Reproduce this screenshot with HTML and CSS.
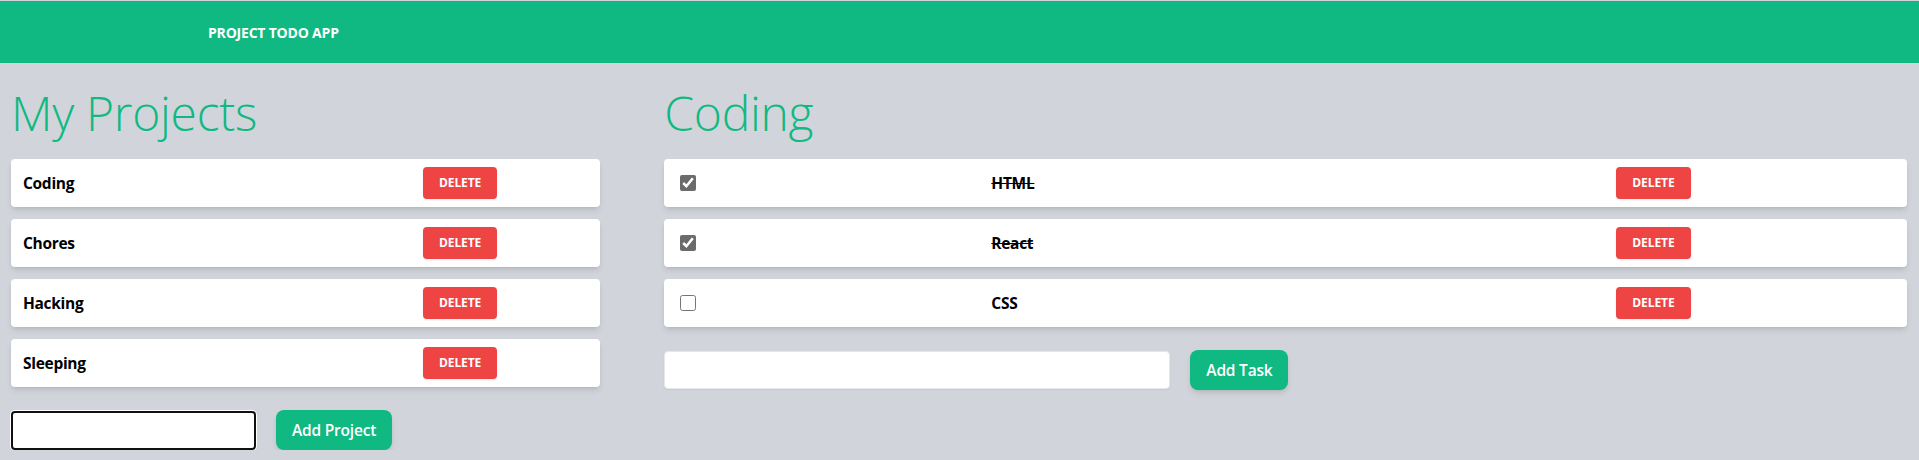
FILE: index.html
```html
<!DOCTYPE html>
<html lang="en">
<head>
<meta charset="utf-8">
<title>Project Todo App</title>
<link rel="stylesheet" href="styles.css">
</head>
<body>
<header class="topbar"><span class="brand">PROJECT TODO APP</span></header>
<main class="board">
  <section class="projects">
    <h1 class="title">My Projects</h1>
    <ul class="list">
      <li class="card project-card"><span class="name">Coding</span><button class="btn-delete">DELETE</button></li>
      <li class="card project-card"><span class="name">Chores</span><button class="btn-delete">DELETE</button></li>
      <li class="card project-card"><span class="name">Hacking</span><button class="btn-delete">DELETE</button></li>
      <li class="card project-card"><span class="name">Sleeping</span><button class="btn-delete">DELETE</button></li>
    </ul>
    <form class="add-row">
      <input class="field field-project" type="text" autofocus>
      <button type="button" class="btn-add">Add Project</button>
    </form>
  </section>
  <section class="tasks">
    <h1 class="title">Coding</h1>
    <ul class="list">
      <li class="card task-card"><input class="check" type="checkbox" checked><span class="name done">HTML</span><button class="btn-delete">DELETE</button></li>
      <li class="card task-card"><input class="check" type="checkbox" checked><span class="name done">React</span><button class="btn-delete">DELETE</button></li>
      <li class="card task-card"><input class="check" type="checkbox"><span class="name">CSS</span><button class="btn-delete">DELETE</button></li>
    </ul>
    <form class="add-row">
      <input class="field field-task" type="text">
      <button type="button" class="btn-add">Add Task</button>
    </form>
  </section>
</main>
</body>
</html>
```
FILE: styles.css
```css
* { box-sizing: border-box; }

html, body {
  margin: 0;
  padding: 0;
  background: #d1d5db;
  font-family: "Open Sans", "Noto Sans", sans-serif;
  color: #000;
}

.topbar {
  margin-top: 1px;
  height: 62px;
  background: #10b981;
  display: flex;
  align-items: center;
  padding-left: 208px;
}

.brand {
  color: #fff;
  font-weight: 700;
  font-size: 14px;
  letter-spacing: -0.2px;
}

.board {
  display: grid;
  grid-template-columns: repeat(3, 1fr);
  column-gap: 64px;
  padding: 26px 12px 0 11px;
}

.tasks { grid-column: span 2; }

.title {
  margin: 0 0 22px;
  font-weight: 300;
  font-size: 48px;
  line-height: 48px;
  color: #10b981;
  letter-spacing: -0.3px;
}

.list {
  list-style: none;
  margin: 0;
  padding: 0;
  display: flex;
  flex-direction: column;
  gap: 12px;
}

.card {
  height: 48px;
  background: #fff;
  border-radius: 4px;
  box-shadow: 0 4px 6px -1px rgba(0,0,0,0.1), 0 2px 4px -2px rgba(0,0,0,0.1);
  display: grid;
  align-items: center;
  justify-items: start;
}

.project-card {
  grid-template-columns: 400px auto;
  padding: 0 12px;
}

.task-card {
  grid-template-columns: 311px 625px auto;
  padding: 0 12px 0 16px;
}

.name {
  font-weight: 700;
  font-size: 15.5px;
  letter-spacing: -0.3px;
}

.done { text-decoration: line-through; }

.check {
  width: 16px;
  height: 16px;
  margin: 0;
  accent-color: #6b6b6b;
}

.btn-delete {
  border: 0;
  margin: 0;
  background: #ef4444;
  color: #fff;
  font-family: inherit;
  font-weight: 700;
  font-size: 12px;
  line-height: 16px;
  padding: 8px 16px;
  border-radius: 4px;
  box-shadow: 0 1px 2px rgba(0,0,0,0.08);
  letter-spacing: -0.1px;
}

.add-row {
  margin: 23px 0 0;
  display: flex;
  align-items: center;
  gap: 20px;
}

.field {
  margin: 0;
  background: #fff;
  border-radius: 4px;
  font-family: inherit;
  font-size: 16px;
  outline: none;
}

.field-project {
  width: 245px;
  height: 39px;
  border: 2px solid #101010;
  box-shadow: 0 0 0 1px #fff;
  padding: 0 10px;
}

.field-task {
  width: 506px;
  height: 38px;
  border: 1px solid #e5e7eb;
  box-shadow: 0 1px 2px rgba(0,0,0,0.06);
  padding: 0 10px;
}

.btn-add {
  border: 0;
  margin: 0;
  height: 40px;
  padding: 0 16px;
  background: #10b981;
  color: #fff;
  font-family: inherit;
  font-weight: 600;
  font-size: 15.5px;
  border-radius: 8px;
  letter-spacing: -0.2px;
  box-shadow: 0 4px 6px -1px rgba(0,0,0,0.1), 0 2px 4px -2px rgba(0,0,0,0.1);
}
```
